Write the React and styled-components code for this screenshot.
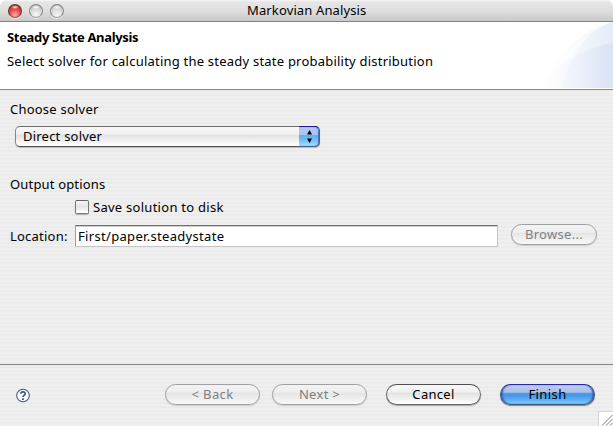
import React from 'react';
import styled, { createGlobalStyle, css } from 'styled-components';

const GlobalStyle = createGlobalStyle`
  * { box-sizing: border-box; }
  body { margin: 0; background: #fff; overflow: hidden; }
`;

const Window = styled.div`
  position: relative;
  width: 613px;
  height: 426px;
  display: flex;
  flex-direction: column;
  overflow: hidden;
  border-radius: 7px 7px 0 0;
  background: repeating-linear-gradient(#efefef 0 2px, #ebebeb 2px 4px);
  color: #000;
  font: 13px/16px 'Noto Sans', 'Open Sans', sans-serif;
`;

const Text = styled.span`
  display: block;
  white-space: nowrap;
  line-height: 16px;
  letter-spacing: ${(p) => p.$spacing ?? 0.22}px;
  font-weight: ${(p) => (p.$bold ? 700 : 400)};
`;

const TitleBar = styled.header`
  flex: none;
  height: 22px;
  display: grid;
  grid-template-columns: 247px 1fr;
  padding-top: 2px;
  background: linear-gradient(#f6f6f6 0, #e6e6e6 2px, #dedede 11px, #c9c9c9 21px);
  border-bottom: 1px solid #828282;
`;

const Lights = styled.div`
  display: flex;
  gap: 7px;
  padding: 2px 0 0 8px;
`;

const Light = styled.i`
  width: 14px;
  height: 14px;
  border-radius: 50%;
  border: 1px solid ${(p) => (p.$close ? '#6c2b2b' : '#858585')};
  border-bottom-color: ${(p) => (p.$close ? '#985454' : '#a0a0a0')};
  background: ${(p) =>
    p.$close
      ? 'radial-gradient(ellipse 4px 2px at 50% 18%, #ffe9e9, transparent), radial-gradient(circle at 50% 85%, #ffaaa0 0, #df4c48 50%, #8d2227 100%)'
      : 'radial-gradient(ellipse 4px 2px at 50% 18%, #fff, transparent), radial-gradient(circle at 50% 85%, #f8f8f8 0, #d4d4d4 60%, #a5a5a5 100%)'};
  box-shadow: 0 1px 0 rgba(255, 255, 255, 0.6);
`;

const Banner = styled.section`
  flex: none;
  height: 68px;
  display: flex;
  justify-content: space-between;
  background: #fff;
  border-bottom: 1px solid #858585;
`;

const BannerText = styled.div`
  display: flex;
  flex-direction: column;
  gap: 8px;
  padding: 7px 0 0 7px;
`;

const Body = styled.main`
  flex: none;
  height: 275px;
  padding: 11px 0 0 10px;
  border-bottom: 1px solid #858585;
`;

const gloss = css`
  background: linear-gradient(#f8f8f8 0, #f1f1f1 35%, #e2e2e2 45%, #eee 65%, #fff 100%);
`;

const Select = styled.div`
  display: flex;
  justify-content: space-between;
  width: 305px;
  height: 21px;
  margin: 9px 0 0 5px;
  padding-left: 7px;
  border: 1px solid #888;
  border-top-color: #6d6d6d;
  border-bottom-color: #505050;
  border-right: 0;
  border-radius: 5px;
  box-shadow: 0 1px 1px rgba(0, 0, 0, 0.22);
  ${gloss}
`;

const SelectLabel = styled.div`
  padding-top: 1px;
`;

const Stepper = styled.div`
  width: 21px;
  height: 21px;
  margin-top: -1px;
  border: 1px solid #4a5f8c;
  border-left: 0;
  border-top-color: #1b1b8b;
  border-radius: 0 5px 5px 0;
  background: linear-gradient(#b5c5ee 0, #a3c8f1 40%, #66acee 45%, #75bdf8 70%, #a0e2ff 100%);
  box-shadow: inset -1px 0 1px #4374c4;
`;

const Options = styled.div`
  display: grid;
  grid-template-columns: 65px 423px 1fr;
  margin-top: 29px;
`;

const Heading = styled.div`
  grid-column: 1 / -1;
  height: 24px;
`;

const CheckRow = styled.label`
  grid-column: 2 / -1;
  display: flex;
  gap: 4px;
  height: 24px;
`;

const CheckLabel = styled.div`
  margin-top: -1px;
`;

const Checkbox = styled.i`
  width: 14px;
  height: 14px;
  border: 1px solid #777;
  border-top-color: #626262;
  border-radius: 2px;
  box-shadow: 0 1px 1px rgba(0, 0, 0, 0.25);
  background: linear-gradient(#f6f6f6, #e5e5e5 45%, #fff);
`;

const LocationLabel = styled.div`
  padding-top: 4px;
`;

const Field = styled.div`
  height: 22px;
  margin-top: 1px;
  padding: 2px 0 0 2px;
  background: #fff;
  border: 1px solid #c6c6c6;
  border-left-color: #a0a0a0;
  border-top: 1px solid #707070;
  box-shadow: inset 0 1px 0 #cfcfcf;
`;

const Button = styled.div`
  display: flex;
  justify-content: center;
  width: ${(p) => p.$width || 95}px;
  height: 21px;
  padding-top: 1px;
  border-radius: 11px;
  border: 1px solid #666;
  border-top-color: #505050;
  box-shadow: 0 1px 1px rgba(0, 0, 0, 0.3);
  ${gloss}
  ${(p) =>
    p.$disabled &&
    css`
      color: #808080;
      border-color: #a0a0a0;
      box-shadow: 0 1px 1px rgba(0, 0, 0, 0.14);
      background: linear-gradient(#f3f3f3 0, #eee 38%, #e5e5e5 45%, #ededed 65%, #f8f8f8 100%);
    `}
  ${(p) =>
    p.$primary &&
    css`
      border-color: #2529a0 #36558c #46586c;
      background: linear-gradient(#c5c9ed 0, #a6c2ec 38%, #4295e1 46%, #4b9eee 62%, #79caff 100%);
      box-shadow: inset 2px 0 2px -1px #213e9b, inset -2px 0 2px -1px #213e9b, 0 1px 1px rgba(0, 0, 0, 0.45);
    `}
`;

const BrowseCell = styled.div`
  padding-left: 13px;
`;

const Footer = styled.footer`
  flex: 1;
  display: grid;
  grid-template-columns: 149px 107px 114px 114px 1fr;
  padding: 19px 0 0 16px;
`;

const Help = styled.div`
  padding-top: 4px;
  svg { display: block; }
`;

const Grip = styled.div`
  position: absolute;
  right: 0;
  bottom: 0;
  width: 15px;
  height: 15px;
  background: #fff;
  border: 1px solid #d5d5d5;
  border-width: 1px 0 0 1px;
  svg { display: block; }
`;

function BannerArt() {
  return (
    <svg width="76" height="66" viewBox="0 0 76 66">
      <defs>
        <linearGradient id="outer">
          <stop offset="0" stopColor="#ffffff" />
          <stop offset=".5" stopColor="#fafbfe" />
          <stop offset="1" stopColor="#f3f6fd" />
        </linearGradient>
        <linearGradient id="middle">
          <stop offset="0" stopColor="#fafcfe" />
          <stop offset="1" stopColor="#e5ecf9" />
        </linearGradient>
        <linearGradient id="inner">
          <stop offset="0" stopColor="#ffffff" />
          <stop offset=".35" stopColor="#f8f9fd" />
          <stop offset="1" stopColor="#dce4f7" />
        </linearGradient>
        <linearGradient id="core">
          <stop offset="0" stopColor="#f4f7fd" />
          <stop offset="1" stopColor="#dae2f6" />
        </linearGradient>
      </defs>
      <path d="M4 66C18 35 43 7 76 0V66Z" fill="url(#outer)" />
      <path d="M25 66C31 36 48 8 76 0V66Z" fill="url(#middle)" />
      <path d="M4 66C23 37 49 25 76 21V66Z" fill="url(#inner)" />
      <path d="M25 66Q28 48 37 36Q56 25 76 21V66Z" fill="url(#core)" />
    </svg>
  );
}

export default function App() {
  return (
    <>
      <GlobalStyle />
      <Window>
        <TitleBar>
          <Lights>
            <Light $close />
            <Light />
            <Light />
          </Lights>
          <Text $spacing={0.13}>Markovian Analysis</Text>
        </TitleBar>
        <Banner>
          <BannerText>
            <Text $bold $spacing={-0.33}>Steady State Analysis</Text>
            <Text>Select solver for calculating the steady state probability distribution</Text>
          </BannerText>
          <BannerArt />
        </Banner>
        <Body>
          <Text>Choose solver</Text>
          <Select>
            <SelectLabel>
              <Text>Direct solver</Text>
            </SelectLabel>
            <Stepper>
              <svg width="21" height="19" viewBox="0 0 21 19">
                <path d="M8 7.5L10.5 3L13 7.5ZM8 11.5H13L10.5 16Z" fill="#000" />
              </svg>
            </Stepper>
          </Select>
          <Options>
            <Heading>
              <Text $spacing={0.17}>Output options</Text>
            </Heading>
            <CheckRow>
              <Checkbox />
              <CheckLabel>
                <Text $spacing={0.27}>Save solution to disk</Text>
              </CheckLabel>
            </CheckRow>
            <LocationLabel>
              <Text>Location:</Text>
            </LocationLabel>
            <Field>
              <Text $spacing={0.32}>First/paper.steadystate</Text>
            </Field>
            <BrowseCell>
              <Button $width={86} $disabled>
                <Text $spacing={0.3}>Browse...</Text>
              </Button>
            </BrowseCell>
          </Options>
        </Body>
        <Footer>
          <Help>
            <svg width="14" height="15" viewBox="0 0 14 15">
              <circle cx="7" cy="7.5" r="6.3" fill="#fff" stroke="#3f5780" strokeWidth="1.1" />
              <path d="M4.8 5.8C4.8 3.2 9.2 3.2 9.2 5.7C9.2 7.3 7 7.2 7 9" fill="none" stroke="#3f5780" strokeWidth="1.7" />
              <path d="M6.1 10.2H7.9V11.9H6.1Z" fill="#3f5780" />
            </svg>
          </Help>
          <Button $disabled>
            <Text $spacing={0.4}>&lt; Back</Text>
          </Button>
          <Button $disabled>
            <Text $spacing={0.3}>Next &gt;</Text>
          </Button>
          <Button>
            <Text $spacing={0.3}>Cancel</Text>
          </Button>
          <Button $primary>
            <Text $spacing={0.4}>Finish</Text>
          </Button>
        </Footer>
        <Grip>
          <svg width="14" height="14" viewBox="0 0 14 14">
            <path d="M3 13.5L13.5 3M7 13.5L13.5 7M11 13.5L13.5 11" stroke="#777" fill="none" />
          </svg>
        </Grip>
      </Window>
    </>
  );
}
